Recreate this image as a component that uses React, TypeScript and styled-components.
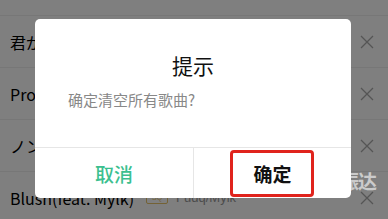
import * as React from 'react'
import styled, { createGlobalStyle } from 'styled-components'

const GlobalStyle = createGlobalStyle`
  html, body {
    margin: 0;
    padding: 0;
    background: #fff;
  }
  body {
    font-family: "Noto Sans CJK SC", "Noto Sans", Roboto, sans-serif;
  }
`

interface ISong {
  key: string
  title: string
  artist?: string
  sq?: boolean
}

const songs: ISong[] = [
  { key: 'a', title: '君がいるだけで', artist: '米米CLUB' },
  { key: 'b', title: 'Promise', artist: '広瀬香美' },
  { key: 'c', title: 'ノンフィクション', artist: '平井堅' },
  { key: 'd', title: 'Blush(feat. Mylk)', artist: 'Fudq/Mylk', sq: true }
]

const CloseIcon = () => (
  <svg width="14" height="14" viewBox="0 0 14 14">
    <path d="M1 1 L13 13 M13 1 L1 13" stroke="currentColor" strokeWidth="1.3" fill="none" />
  </svg>
)

export default function App() {
  return (
    <Page>
      <GlobalStyle />
      <SongList>
        {songs.map(song => (
          <SongRow key={song.key}>
            <SongInfo>
              <SongTitle>{song.title}</SongTitle>
              {song.sq && <SqBadge>SQ</SqBadge>}
              {song.artist && <SongArtist>{song.artist}</SongArtist>}
            </SongInfo>
            <RemoveButton>
              <CloseIcon />
            </RemoveButton>
          </SongRow>
        ))}
      </SongList>
      <Overlay>
        <Watermark>振达</Watermark>
        <Dialog>
          <DialogBody>
            <DialogTitle>提示</DialogTitle>
            <DialogMessage>确定清空所有歌曲?</DialogMessage>
          </DialogBody>
          <DialogActions>
            <ActionButton $tone="cancel">取消</ActionButton>
            <ActionButton $tone="confirm">
              确定
              <Highlight />
            </ActionButton>
          </DialogActions>
        </Dialog>
      </Overlay>
    </Page>
  )
}

const Page = styled.div`
  position: relative;
  width: 388px;
  height: 219px;
  overflow: hidden;
  background: #fff;
`
const SongList = styled.ul`
  list-style: none;
  margin: 0;
  padding: 15px 0 0 0;
`
const SongRow = styled.li`
  display: flex;
  align-items: center;
  justify-content: space-between;
  height: 51px;
  padding: 0 14px 0 10px;
  border-top: 1px solid #eee;
`
const SongInfo = styled.div`
  display: flex;
  align-items: center;
  gap: 8px;
  min-width: 0;
  white-space: nowrap;
`
const SongTitle = styled.span`
  font-size: 16px;
  color: #000;
`
const SqBadge = styled.span`
  display: inline-flex;
  align-items: center;
  justify-content: center;
  width: 20px;
  height: 11px;
  border: 1px solid #e8c46a;
  border-radius: 2px;
  font-size: 7px;
  color: #e8c46a;
  font-family: "Liberation Sans", sans-serif;
  margin-left: 4px;
`
const SongArtist = styled.span`
  font-size: 13px;
  color: #999;
  font-family: "Liberation Sans", sans-serif;
`
const RemoveButton = styled.span`
  display: flex;
  color: #aaa;
`
const Overlay = styled.div`
  position: absolute;
  inset: 0;
  background: rgba(0, 0, 0, 0.5);
  display: flex;
  align-items: center;
  justify-content: center;
  padding: 0 2px 2px 0;
  box-sizing: border-box;
`
const Watermark = styled.span`
  position: absolute;
  left: 340px;
  top: 167px;
  font-size: 19px;
  font-weight: 700;
  color: rgba(255, 255, 255, 0.6);
  letter-spacing: -1px;
`
const Dialog = styled.div`
  position: relative;
  width: 316px;
  height: 179px;
  background: #fff;
  border-radius: 5px;
  display: flex;
  flex-direction: column;
`
const DialogBody = styled.div`
  flex: 1;
  padding: 0 33px;
  display: flex;
  flex-direction: column;
`
const DialogTitle = styled.h2`
  margin: 33px 0 0 0;
  text-align: center;
  font-size: 21px;
  line-height: 26px;
  font-weight: 400;
  color: #111;
`
const DialogMessage = styled.p`
  margin: 12px 0 0 0;
  font-size: 15px;
  line-height: 20px;
  color: #888;
`
const DialogActions = styled.div`
  display: grid;
  grid-template-columns: 1fr 1fr;
  height: 50px;
  border-top: 1px solid #e6e6e6;
`
const ActionButton = styled.div<{ $tone: 'cancel' | 'confirm' }>`
  position: relative;
  display: flex;
  align-items: center;
  justify-content: center;
  font-size: 19px;
  font-weight: ${p => (p.$tone === 'confirm' ? 700 : 500)};
  color: ${p => (p.$tone === 'confirm' ? '#111' : '#3cbf8f')};
  & + & {
    border-left: 1px solid #e6e6e6;
  }
`
const Highlight = styled.span`
  position: absolute;
  left: 36px;
  top: 2px;
  width: 78px;
  height: 41px;
  border: 3px solid #e0231c;
  border-radius: 4px;
`
